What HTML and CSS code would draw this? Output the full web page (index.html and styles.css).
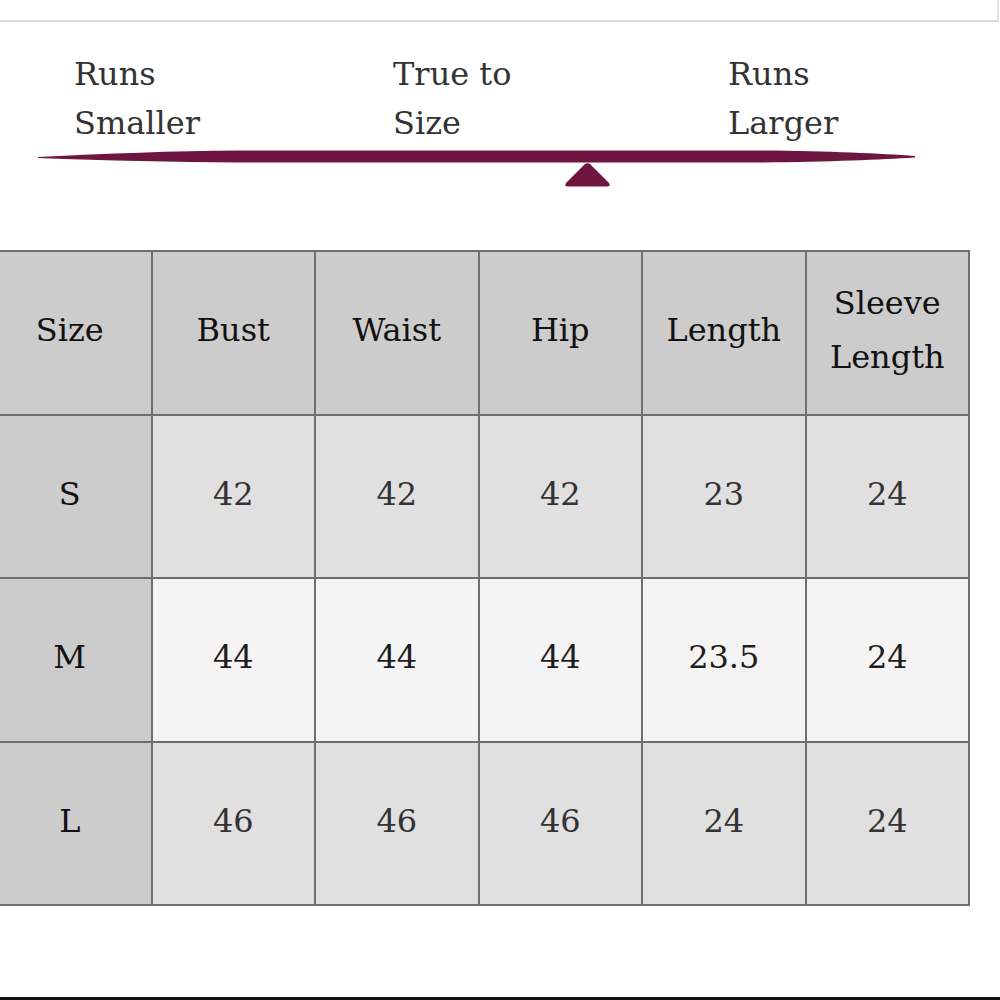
FILE: index.html
```html
<!DOCTYPE html>
<html lang="en">
<head>
<meta charset="utf-8">
<title>Size Chart</title>
<link rel="stylesheet" href="styles.css">
</head>
<body>
<div class="page">
  <div class="topbar"></div>
  <section class="fit">
    <div class="fit-labels">
      <div class="fit-label fit-small">Runs<br>Smaller</div>
      <div class="fit-label fit-true">True to<br>Size</div>
      <div class="fit-label fit-large">Runs<br>Larger</div>
    </div>
    <svg class="fit-scale" width="1000" height="48" viewBox="0 0 1000 48">
      <path d="M38 9 C 110 5.5, 170 3, 240 2.5 L 760 2.5 C 830 3, 880 5.5, 915 8 L 915 9.5 C 880 11.5, 830 14, 760 14.5 L 240 14.5 C 170 14, 110 12.5, 38 10 Z" fill="#6e1540"/>
      <path d="M584.5 16.5 Q 587.5 14 590.5 16.5 L 609 35 Q 611 38.5 607 38.5 L 568 38.5 Q 564 38.5 566 35 Z" fill="#6e1540"/>
    </svg>
  </section>
  <table class="chart">
    <thead>
      <tr>
        <th>Size</th><th>Bust</th><th>Waist</th><th>Hip</th><th>Length</th><th>Sleeve Length</th>
      </tr>
    </thead>
    <tbody>
      <tr class="row-alt">
        <th>S</th><td>42</td><td>42</td><td>42</td><td>23</td><td>24</td>
      </tr>
      <tr class="row-light">
        <th>M</th><td>44</td><td>44</td><td>44</td><td>23.5</td><td>24</td>
      </tr>
      <tr class="row-alt">
        <th>L</th><td>46</td><td>46</td><td>46</td><td>24</td><td>24</td>
      </tr>
    </tbody>
  </table>
  <div class="bottombar"></div>
</div>
</body>
</html>
```

FILE: styles.css
```css
html, body {
  margin: 0;
  padding: 0;
  background: #ffffff;
  overflow: hidden;
}

body {
  font-family: "DejaVu Serif", "Liberation Serif", serif;
  color: #222;
}

.page {
  width: 1000px;
  height: 1000px;
  display: flex;
  flex-direction: column;
}

.topbar {
  height: 20px;
  border-bottom: 2px solid #dcdcdc;
  border-right: 2px solid #e4e4e4;
  box-sizing: content-box;
  width: 997px;
}

.fit {
  padding-top: 28px;
}

.fit-labels {
  display: flex;
  padding-left: 74px;
  font-size: 32px;
  line-height: 49px;
  color: #333;
}

.fit-small { width: 319px; }
.fit-true { width: 335px; }
.fit-large { flex: 1; }

.fit-scale {
  display: block;
}

.chart {
  margin-top: 54px;
  margin-left: -13px;
  border-collapse: collapse;
  table-layout: fixed;
  width: 983px;
  font-size: 32px;
  line-height: 54px;
}

.chart th,
.chart td {
  border: 2px solid #6f6f6f;
  height: 156.5px;
  padding: 0 8px 5px;
  text-align: center;
  vertical-align: middle;
  font-weight: normal;
}

.chart thead th {
  background: #cccccc;
  color: #111;
}

.chart tbody th {
  background: #cccccc;
  color: #111;
}

.row-alt td {
  background: #e0e0e0;
  color: #333;
}

.row-light td {
  background: #f4f4f4;
  color: #1e1e1e;
}

.bottombar {
  margin-top: auto;
  height: 3px;
  background: #111;
}
```
